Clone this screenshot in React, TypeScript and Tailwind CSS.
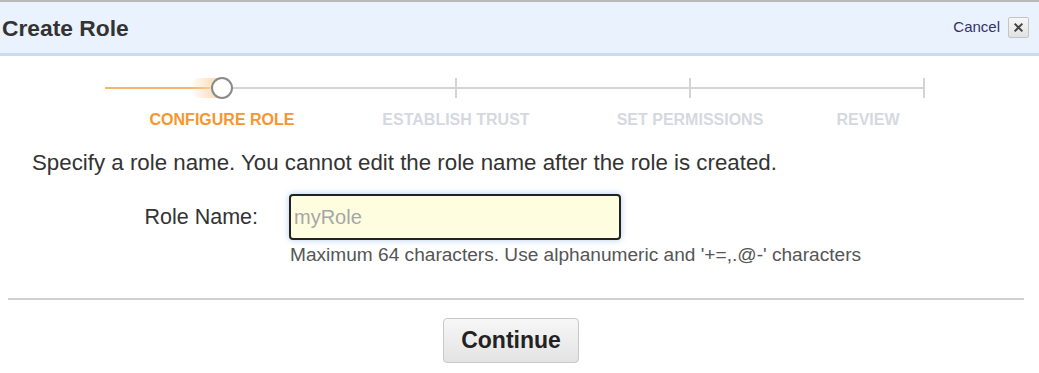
export default function App() {
  const steps = [
    { label: "CONFIGURE ROLE", active: true },
    { label: "ESTABLISH TRUST", active: false },
    { label: "SET PERMISSIONS", active: false },
    { label: "REVIEW", active: false },
  ]

  return (
    <div className="w-[1039px] h-[373px] bg-white overflow-hidden font-['Liberation_Sans',Arial,sans-serif] text-[#333]">
      {/* Header */}
      <div className="border-t-2 border-[#b9b9b9] bg-[#eaf2fd] border-b-[3px] border-b-[#c9dcf3] h-[56px] flex items-center justify-between pl-[2px] pr-[10px]">
        <h1 className="text-[22.8px] leading-[26px] font-bold text-[#333] pt-[1px]">Create Role</h1>
        <div className="flex items-center gap-[8px]">
          <a className="text-[15px] text-[#333366] cursor-pointer">Cancel</a>
          <button className="w-[21px] h-[21px] flex items-center justify-center border border-[#c4c4c4] rounded-[2px] bg-gradient-to-b from-[#f7f7f7] to-[#e2e2e2]">
            <svg width="11" height="11" viewBox="0 0 10 10">
              <path d="M1.5 1.5 L8.5 8.5 M8.5 1.5 L1.5 8.5" stroke="#444" strokeWidth="1.8" />
            </svg>
          </button>
        </div>
      </div>

      {/* Progress */}
      <div className="pl-[105px] pt-[20px]">
        <div className="relative w-[820px] h-[24px] flex items-center">
          <div className="h-[2px] w-[105px] bg-[#f5b56a]" />
          <div className="h-[2px] flex-1 bg-[#d4d4d4]" />
          <div className="absolute left-[85px] top-[2px] w-[30px] h-[20px] bg-gradient-to-r from-transparent to-[#fbd7ac] rounded-l-full" />
          <div className="absolute left-[106px] top-[1px] w-[22px] h-[22px] rounded-full border-2 border-[#8a8a8a] bg-white" />
          <div className="absolute left-[350px] top-[2px] w-[2px] h-[20px] bg-[#d4d4d4]" />
          <div className="absolute left-[584px] top-[2px] w-[2px] h-[20px] bg-[#d4d4d4]" />
          <div className="absolute left-[818px] top-[2px] w-[2px] h-[20px] bg-[#d4d4d4]" />
        </div>
      </div>
      <div className="flex pl-[105px] mt-[10px]">
        {steps.map((s, i) => (
          <div
            key={s.label}
            className={
              i === 0
                ? "w-[234px] text-center text-[16px] leading-[20px] font-bold text-[#f7962c]"
                : i === 3
                  ? "w-[234px] text-center text-[16px] leading-[20px] font-bold text-[#d5d9df] -ml-[56px]"
                  : "w-[234px] text-center text-[16px] leading-[20px] font-bold text-[#d5d9df]"
            }
          >
            {s.label}
          </div>
        ))}
      </div>

      {/* Body */}
      <p className="ml-[32px] mt-[20px] text-[22.3px] leading-[26px] text-[#333]">
        Specify a role name. You cannot edit the role name after the role is created.
      </p>
      <div className="flex items-center mt-[18px]">
        <label className="w-[258px] text-right text-[21.5px] text-[#333]">Role Name:</label>
        <input
          placeholder="myRole"
          className="ml-[31px] w-[332px] h-[46px] rounded-[4px] border-2 border-[#222] bg-[#fefde0] px-[3px] text-[20px] text-[#333] placeholder:text-[#a6a6a6] shadow-[0_0_6px_rgba(120,170,230,0.6)] outline-none font-['Liberation_Sans',Arial,sans-serif]"
        />
      </div>
      <p className="ml-[290px] mt-[5px] text-[19.1px] leading-[20px] text-[#555]">
        Maximum 64 characters. Use alphanumeric and '+=,.@-' characters
      </p>

      {/* Footer */}
      <div className="mx-[8px] w-[1016px] mt-[33px] h-[2px] bg-[#d0d0d0]" />
      <div className="flex pl-[443px] mt-[18px]">
        <button className="w-[136px] h-[45px] rounded-[4px] border border-[#c9c9c9] bg-gradient-to-b from-[#f7f7f7] to-[#e3e3e3] text-[23px] font-bold text-[#222]">
          Continue
        </button>
      </div>
    </div>
  )
}
